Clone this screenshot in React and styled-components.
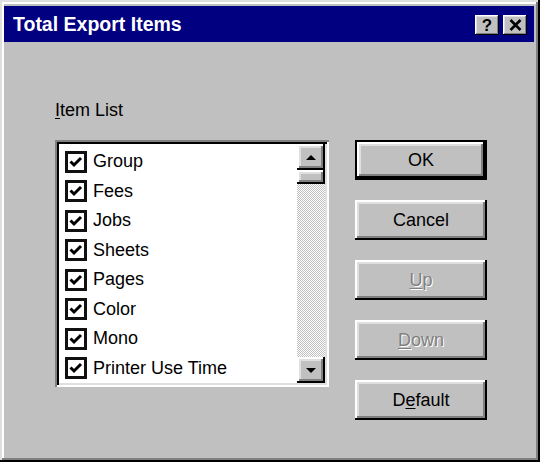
import React from 'react';
import styled, { createGlobalStyle } from 'styled-components';

const GlobalStyle = createGlobalStyle`
	body {
		margin: 0;
		background: #c0c0c0;
		font-family: "Liberation Sans", Arial, sans-serif;
	}
`;

const raised = `inset -2px -2px #000, inset 2px 2px #fff, inset -4px -4px #808080, inset 4px 4px #dfdfdf`;

const Window = styled.div`
	width: 540px;
	height: 462px;
	box-sizing: border-box;
	background: #c0c0c0;
	padding: 6px 6px 4px 4px;
	box-shadow: inset -2px -2px #000, inset 2px 2px #dfdfdf, inset -4px -4px #808080, inset 4px 4px #fff;
	display: flex;
	flex-direction: column;
`;

const TitleBar = styled.div`
	height: 36px;
	background: #000080;
	display: flex;
	align-items: center;
	justify-content: space-between;
	padding: 0 7px 0 9px;
	color: #fff;
	font-weight: bold;
	font-size: 19.5px;
`;

const TitleButtons = styled.div`
	display: flex;
	gap: 4px;
	margin-top: 2px;
`;

const TitleButton = styled.div`
	width: 24px;
	height: 20px;
	box-sizing: border-box;
	background: #c0c0c0;
	box-shadow: inset -1px -1px #000, inset 1px 1px #fff, inset -2px -2px #808080, inset 2px 2px #dfdfdf;
	display: flex;
	align-items: center;
	justify-content: center;
	color: #000;
	font-size: 17px;
	font-weight: bold;
	line-height: 1;
`;

const Body = styled.div`
	display: flex;
	flex-direction: column;
	padding: 57px 0 0 51px;
`;

const Label = styled.div`
	font-size: 18px;
	line-height: 22px;
	margin-bottom: 19px;
	color: #000;
`;

const Mnemonic = styled.span`
	text-decoration: underline;
	text-underline-offset: 2px;
`;

const Row = styled.div`
	display: flex;
	align-items: flex-start;
	gap: 26px;
`;

const ListBox = styled.div`
	width: 274px;
	height: 247px;
	box-sizing: border-box;
	background: #fff;
	padding: 4px;
	display: flex;
	box-shadow: inset 2px 2px #808080, inset -2px -2px #fff, inset 4px 4px #000, inset -4px -4px #dfdfdf;
`;

const Items = styled.div`
	flex: 1;
	padding-top: 3px;
`;

const Item = styled.div`
	height: 29.5px;
	display: flex;
	align-items: center;
	gap: 6px;
	padding-left: 6px;
	font-size: 18px;
	color: #000;
`;

const CheckBox = styled.div`
	width: 22px;
	height: 22px;
	box-sizing: border-box;
	border: 3px solid #111;
	background: #fff;
	display: flex;
	align-items: center;
	justify-content: center;
`;

const ScrollBar = styled.div`
	width: 28px;
	display: flex;
	flex-direction: column;
`;

const ScrollButton = styled.div`
	height: ${p => p.$h}px;
	background: #c0c0c0;
	box-shadow: ${raised};
	display: flex;
	align-items: center;
	justify-content: center;
`;

const Track = styled.div`
	flex: 1;
	background-color: #fff;
	background-image: conic-gradient(#c0c0c0 25%, #fff 0 50%, #c0c0c0 0 75%, #fff 0);
	background-size: 2px 2px;
`;

const Buttons = styled.div`
	display: flex;
	flex-direction: column;
	gap: 20px;
`;

const Button = styled.div`
	width: 132px;
	height: 40px;
	box-sizing: border-box;
	background: #c0c0c0;
	display: flex;
	align-items: center;
	justify-content: center;
	font-size: 18px;
	color: ${p => (p.$disabled ? '#808080' : '#000')};
	text-shadow: ${p => (p.$disabled ? '1px 1px #fff' : 'none')};
	box-shadow: ${p =>
		p.$default
			? 'inset 0 0 0 2px #000, inset -4px -4px #000, inset 4px 4px #fff, inset -6px -6px #808080, inset 6px 6px #dfdfdf'
			: raised};
`;

const items = ['Group', 'Fees', 'Jobs', 'Sheets', 'Pages', 'Color', 'Mono', 'Printer Use Time'];

function Check() {
	return (
		<svg width="16" height="16" viewBox="0 0 16 16">
			<path d="M2.5 7.5 L6 11 L13 4" stroke="#000" strokeWidth="3" fill="none" />
		</svg>
	);
}

function Arrow({ down }) {
	return (
		<svg width="10" height="5" viewBox="0 0 10 5">
			<polygon points={down ? '0,0 10,0 5,5' : '0,5 10,5 5,0'} fill="#000" />
		</svg>
	);
}

function App() {
	return (
		<>
			<GlobalStyle />
			<Window>
				<TitleBar>
					<span>Total Export Items</span>
					<TitleButtons>
						<TitleButton>?</TitleButton>
						<TitleButton>
							<svg width="13" height="12" viewBox="0 0 13 12">
								<path d="M1.5 1 L11.5 11 M11.5 1 L1.5 11" stroke="#000" strokeWidth="2.6" />
							</svg>
						</TitleButton>
					</TitleButtons>
				</TitleBar>
				<Body>
					<Label>
						<Mnemonic>I</Mnemonic>tem List
					</Label>
					<Row>
						<ListBox>
							<Items>
								{items.map(name => (
									<Item key={name}>
										<CheckBox>
											<Check />
										</CheckBox>
										{name}
									</Item>
								))}
							</Items>
							<ScrollBar>
								<ScrollButton $h={26}>
									<Arrow />
								</ScrollButton>
								<ScrollButton $h={14} />
								<Track />
								<ScrollButton $h={26}>
									<Arrow down />
								</ScrollButton>
							</ScrollBar>
						</ListBox>
						<Buttons>
							<Button $default>OK</Button>
							<Button>Cancel</Button>
							<Button $disabled>
								<Mnemonic>U</Mnemonic>p
							</Button>
							<Button $disabled>
								<Mnemonic>D</Mnemonic>own
							</Button>
							<Button>
								D<Mnemonic>e</Mnemonic>fault
							</Button>
						</Buttons>
					</Row>
				</Body>
			</Window>
		</>
	);
}

export default App;
